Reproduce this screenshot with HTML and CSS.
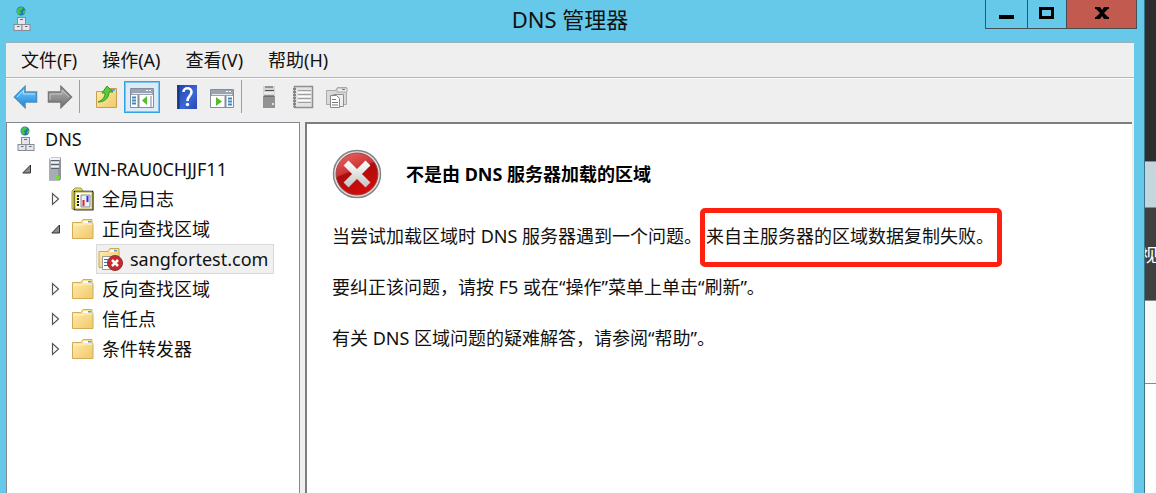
FILE: index.html
```html
<!DOCTYPE html>
<html lang="zh-CN">
<head>
    <meta charset="UTF-8">
    <meta name="viewport" content="width=device-width, initial-scale=1.0">
    <title>DNS 管理器</title>
    <link rel="stylesheet" href="styles.css">
</head>
<body>
    <!-- 公用图标 -->
    <svg class="defs" aria-hidden="true">
        <defs>
            <linearGradient id="gFolder" x1="0" y1="0" x2="1" y2="1">
                <stop offset="0" stop-color="#ffeeb0"/>
                <stop offset="1" stop-color="#f0c868"/>
            </linearGradient>
            <linearGradient id="gBlue" x1="0" y1="0" x2="0" y2="1">
                <stop offset="0" stop-color="#7fd0fb"/>
                <stop offset="1" stop-color="#1585dc"/>
            </linearGradient>
            <linearGradient id="gGray" x1="0" y1="0" x2="0" y2="1">
                <stop offset="0" stop-color="#b5b5b5"/>
                <stop offset="1" stop-color="#707070"/>
            </linearGradient>
            <linearGradient id="gHelp" x1="0" y1="0" x2="1" y2="1">
                <stop offset="0" stop-color="#1f43ac"/>
                <stop offset="0.6" stop-color="#3c67d6"/>
                <stop offset="1" stop-color="#2547b4"/>
            </linearGradient>
            <linearGradient id="gRed" x1="0" y1="0" x2="0.4" y2="1">
                <stop offset="0" stop-color="#ee6a6a"/>
                <stop offset="0.48" stop-color="#cc3434"/>
                <stop offset="0.52" stop-color="#a90d0d"/>
                <stop offset="1" stop-color="#d20a0a"/>
            </linearGradient>
            <linearGradient id="gCross" gradientUnits="userSpaceOnUse" x1="0" y1="12" x2="0" y2="38">
                <stop offset="0" stop-color="#ffffff"/>
                <stop offset="1" stop-color="#c4c4c4"/>
            </linearGradient>
        </defs>
        <symbol id="dns" viewBox="0 0 18 26">
            <circle cx="8" cy="5" r="4.5" fill="#2577b8"/>
            <path d="M4 4Q5 1 9 1L10 3 7 5 8 7 6 9Q3 7 4 4M10 5l2-1v3l-2 1z" fill="#43c34a"/>
            <g fill="#e4e6ec" stroke="#888c94">
                <rect x="4.5" y="11.500" width="8" height="7"/>
                <rect x="1" y="18.500" width="8" height="6"/>
                <rect x="9" y="18.500" width="8" height="6"/>
            </g>
            <path d="M7 13.500h3M4 20.500h2.500M12 20.500h2.500" stroke="#666b74"/>
        </symbol>
        <symbol id="folder" viewBox="0 0 24 24">
            <path d="M1.500 5.500h8.500l2-3h9v4h1v15h-20.500z" fill="url(#gFolder)" stroke="#d3ab57"/>
            <path d="M12 4h8v2h-8z" fill="#fffdf2"/>
            <path d="M17 4h3v1.500h-3z" fill="#4c9fe0"/>
            <path d="M2.500 8h9l2-1h8" fill="none" stroke="#fff5cc"/>
        </symbol>
        <symbol id="server" viewBox="0 0 14 24">
            <path d="M1 2l2-1.500h10V22l-1 1.500H1z" fill="#8d949b"/>
            <path d="M1 2h9v21.500H1z" fill="#a7adb3"/>
            <path d="M2 2h10M3 5.500h8M3 9.500h8" stroke="#eff3f5" stroke-width="2"/>
            <path d="M3 3.500h8M3 7.500h8M3 11.500h8" stroke="#596067"/>
            <circle cx="10" cy="20.500" r="2" fill="#6be51c"/>
        </symbol>
        <symbol id="server-off" viewBox="0 0 14 24">
            <path d="M1 1h12v22H1z" fill="#929292"/>
            <path d="M1 1h12v10H1z" fill="#d4d4d4"/>
            <path d="M3 2h8M3 5.500h9M2 11h10" stroke="#515151"/>
            <path d="M2 8h10" stroke="#fff"/>
            <path d="M10 18h2v2h-2z" fill="#e0e0e0"/>
        </symbol>
        <symbol id="log" viewBox="0 0 24 24">
            <path d="M1 4l3-3h6l2 3v18H1z" fill="#e8e45b" stroke="#9b9a4a"/>
            <path d="M3.500 4.500h18v18h-18z" fill="#fff" stroke="#111" stroke-width="1.500"/>
            <path d="M4 5h17v17H4z" fill="none" stroke="#e8e45b" stroke-width="1"/>
            <path d="M22.500 5v18H5" fill="none" stroke="#777"/>
            <path d="M6 8v12" stroke="#161616" stroke-width="4" stroke-dasharray="2 1"/>
            <path d="M5 8v12" stroke="#f5ee32" stroke-width="2" stroke-dasharray="2 1"/>
            <path d="M10 8h9v12h-9z" fill="#eeeef8" stroke="#888"/>
            <path d="M12.500 13v6" stroke="#e72222" stroke-width="2"/>
            <path d="M16.500 9v6" stroke="#2634d6" stroke-width="2"/>
        </symbol>
        <symbol id="zone-error" viewBox="0 0 26 24">
            <path d="M1 4.500h9l2-3h9v19H1z" fill="url(#gFolder)" stroke="#d0a650"/>
            <path d="M12 3h7v2h-7z" fill="#fffdf2"/>
            <path d="M16 3h3v1.500h-3z" fill="#4c9fe0"/>
            <path d="M4.500 9.500h10v13h-10z" fill="#fff" stroke="#999"/>
            <path d="M6 12.500h4M6 15.500h4M6 18.500h4" stroke="#3b70b8"/>
            <circle cx="17" cy="16" r="7.500" fill="#c4292c" stroke="#8e3436"/>
            <path d="M14 13l6 6M20 13l-6 6" stroke="#fff" stroke-width="2.500"/>
        </symbol>
        <symbol id="closed" viewBox="0 0 10 14">
            <path d="M1.500 1.500v11l6-5.500z" fill="#fff" stroke="#555" stroke-width="1.200"/>
        </symbol>
        <symbol id="open" viewBox="0 0 10 14">
            <path d="M8.500 3v8H.8z" fill="#8a8a8a" stroke="#333"/>
        </symbol>
    </svg>

    <div class="desktop">
        <div class="window">
            <header class="titlebar">
                <svg class="app-icon"><use href="#dns"/></svg>
                <h1>DNS 管理器</h1>
                <div class="controls">
                    <button type="button" class="min" aria-label="最小化"><svg viewBox="0 0 16 14"><path d="M0 9h15v4H0z"/></svg></button>
                    <button type="button" class="max" aria-label="最大化"><svg viewBox="0 0 16 14"><path d="M1.500 2.500h12v9h-12z" fill="none" stroke="#000" stroke-width="3"/></svg></button>
                    <button type="button" class="close" aria-label="关闭"><svg viewBox="0 0 16 14"><path d="M1 1h5l2 3 2-3h5v2h-1l-4 4 4 4h1v2h-5L8 10l-2 3H1v-2h1l4-4-4-4H1z"/></svg></button>
                </div>
            </header>

            <nav class="menubar">
                <button type="button">文件(F)</button>
                <button type="button">操作(A)</button>
                <button type="button">查看(V)</button>
                <button type="button">帮助(H)</button>
            </nav>

            <div class="toolbar">
                <div class="tools nav-tools">
                    <button type="button" aria-label="后退"><svg viewBox="0 0 26 24"><path d="M1.500 12L12 1.500V7h11.500v10H12v5.500z" fill="url(#gBlue)" stroke="#4a90bd" stroke-width="1.500"/><path d="M4 12l6.500-6.500V9H22" fill="none" stroke="#a9e2ff"/></svg></button>
                    <button type="button" aria-label="前进"><svg viewBox="0 0 26 24"><path d="M24.500 12L14 1.500V7H1.500v10H14v5.500z" fill="url(#gGray)" stroke="#777" stroke-width="1.500"/><path d="M3 15V9h12V5l7 7" fill="none" stroke="#c2c2c2"/></svg></button>
                </div>
                <div class="tools view-tools">
                    <button type="button" aria-label="上一级"><svg viewBox="0 0 26 24"><path d="M2.500 6.500h10l2-3h8v19h-20z" fill="url(#gFolder)" stroke="#c6a04e"/><path d="M16 5h5" stroke="#5aa9e5" stroke-width="2"/><path d="M4 17c5-2 7-5 7-9H8l5-7 6 6h-4c0 6-4 10-11 10z" fill="#58cc38" stroke="#389922"/></svg></button>
                    <button type="button" class="active" aria-label="显示/隐藏控制台树"><svg viewBox="0 0 26 24"><path d="M1.500 3.500h23v19h-23z" fill="#fff" stroke="#858d98"/><path d="M2 4h22v6H2z" fill="#9aa4b1"/><path d="M3 8.500h20" stroke="#e3e7ec"/><path d="M17 5.500h2M20 5.500h2" stroke="#fff"/><path d="M9.500 10v12" stroke="#858d98" stroke-width="2"/><path d="M3 12.500h4M3 15.500h4M3 18.500h4" stroke="#3988c8" stroke-width="2"/><path d="M18 11v9l-5-4.500z" fill="#54bd2d"/><path d="M22 11v11" stroke="#bbc2cb" stroke-width="2"/></svg></button>
                </div>
                <div class="tools help-tools">
                    <button type="button" aria-label="帮助"><svg viewBox="0 0 26 24"><path d="M3 0h20v24H3z" fill="url(#gHelp)"/><path d="M4.500 0v24" stroke="#183583" stroke-width="2"/><path d="M9.500 7c0-5 8-5 8 0 0 4-4 4-4 9" fill="none" stroke="#fff" stroke-width="2.600"/><circle cx="13.500" cy="19.500" r="1.700" fill="#fff"/></svg></button>
                    <button type="button" aria-label="显示/隐藏操作窗格"><svg viewBox="0 0 26 24"><path d="M1.500 4.500h23v18h-23z" fill="#fff" stroke="#858d98"/><path d="M2 5h22v6H2z" fill="#9aa4b1"/><path d="M3 9.500h20" stroke="#e3e7ec"/><path d="M17 6.500h2M20 6.500h2" stroke="#fff"/><path d="M16.500 11v11" stroke="#858d98" stroke-width="2"/><path d="M19 13.500h4M19 16.500h4M19 19.500h4" stroke="#3988c8" stroke-width="2"/><path d="M7 12v9l6-4.500z" fill="#54bd2d"/></svg></button>
                </div>
                <div class="tools item-tools">
                    <button type="button" aria-label="新建服务器" disabled><svg><use href="#server-off"/></svg></button>
                    <button type="button" aria-label="新建记录" disabled><svg viewBox="0 0 26 24"><path d="M4.500 1.500h18v21h-18z" fill="#e4e4e4" stroke="#8f8f8f" stroke-width="1.500"/><path d="M8 5.500h13M8 9.500h13M8 13.500h13M8 17.500h13" stroke="#a0a0a0"/><path d="M8 7.500h13M8 11.500h13M8 15.500h13" stroke="#fff"/><path d="M4.500 3v19" stroke="#858585" stroke-width="3" stroke-dasharray="2 1"/></svg></button>
                    <button type="button" aria-label="新建区域" disabled><svg viewBox="0 0 26 24"><path d="M2.500 5.500h9l2-3h9v17h-20z" fill="#d9d9d9" stroke="#aaa"/><path d="M13 3h10v4H13z" fill="#eee" stroke="#aaa"/><path d="M18 4.500h3" stroke="#777"/><path d="M9.500 9.500h10v12h-10z" fill="#eee" stroke="#909090"/><path d="M6.500 10.500h6l3 3v9h-9z" fill="#fff" stroke="#888"/><path d="M8 14.500h4M8 17.500h6M8 20h6" stroke="#777"/></svg></button>
                </div>
            </div>

            <div class="panes">
                <aside class="tree">
                    <div class="node root"><svg class="icon-dns"><use href="#dns"/></svg><span>DNS</span></div>
                    <div class="node host"><svg class="arrow"><use href="#open"/></svg><svg class="icon-server"><use href="#server"/></svg><span>WIN-RAU0CHJJF11</span></div>
                    <div class="node child"><svg class="arrow"><use href="#closed"/></svg><svg class="icon"><use href="#log"/></svg><span>全局日志</span></div>
                    <div class="node child"><svg class="arrow"><use href="#open"/></svg><svg class="icon"><use href="#folder"/></svg><span>正向查找区域</span></div>
                    <div class="node zone"><div class="selected"><svg class="icon"><use href="#zone-error"/></svg><span>sangfortest.com</span></div></div>
                    <div class="node child"><svg class="arrow"><use href="#closed"/></svg><svg class="icon"><use href="#folder"/></svg><span>反向查找区域</span></div>
                    <div class="node child"><svg class="arrow"><use href="#closed"/></svg><svg class="icon"><use href="#folder"/></svg><span>信任点</span></div>
                    <div class="node child"><svg class="arrow"><use href="#closed"/></svg><svg class="icon"><use href="#folder"/></svg><span>条件转发器</span></div>
                </aside>

                <main class="content">
                    <div class="heading">
                        <svg class="error-icon" viewBox="0 0 50 50">
                            <circle cx="25" cy="25" r="23.500" fill="#e4e4e4" stroke="#858585" stroke-width="1.500"/>
                            <circle cx="25" cy="25" r="21" fill="url(#gRed)" stroke="#a04545"/>
                            <path d="M16.500 16.500l17 17M33.500 16.500l-17 17" stroke="url(#gCross)" stroke-width="7" stroke-linecap="square"/>
                        </svg>
                        <h2>不是由 DNS 服务器加载的区域</h2>
                    </div>
                    <p>当尝试加载区域时 DNS 服务器遇到一个问题。<span class="highlight">来自主服务器的区域数据复制失败。</span></p>
                    <p>要纠正该问题，请按 F5 或在“操作”菜单上单击“刷新”。</p>
                    <p>有关 DNS 区域问题的疑难解答，请参阅“帮助”。</p>
                </main>
            </div>
        </div>

        <!-- 窗口后面露出的部分 -->
        <div class="behind">
            <div class="strip dark"></div>
            <div class="strip pale"></div>
            <div class="strip label">视</div>
            <div class="strip light"></div>
        </div>
    </div>
</body>
</html>
```

FILE: styles.css
```css
* {
    box-sizing: border-box;
}
body {
    margin: 0;
    font-family: "Noto Sans", "Noto Sans CJK SC", sans-serif;
    font-size: 18px;
    line-height: 30px;
    color: #111;
    background: #fff;
}
button {
    padding: 0;
    border: none;
    background: none;
    font: inherit;
    color: inherit;
}
svg {
    display: block;
    flex: none;
}
.defs {
    position: absolute;
    width: 0;
    height: 0;
}
.desktop {
    display: flex;
    height: 100vh;
    overflow: hidden;
}

/* 窗口 */
.window {
    flex: 1;
    min-width: 0;
    display: flex;
    flex-direction: column;
    padding: 0 10px 0 6px;
    background: #66c9e9;
    border-right: 1px solid #38748a;
}
.titlebar {
    display: grid;
    grid-template-columns: 1fr auto 1fr;
    align-items: start;
    height: 42px;
}
.app-icon {
    width: 18px;
    height: 26px;
    margin: 6px 0 0 7px;
}
h1 {
    margin: 4px 0 0;
    font-size: 22px;
    font-weight: 400;
    line-height: 30px;
}
.controls {
    display: flex;
    justify-self: end;
    margin-right: -3px;
    border: 1px solid #454f55;
    border-top: none;
}
.controls button {
    display: flex;
    justify-content: center;
    width: 42px;
    height: 28px;
    padding-top: 6px;
    border-right: 1px solid #454f55;
}
.controls .max {
    width: 39px;
}
.controls .close {
    width: 69px;
    border-right: none;
    background: #c35a50;
}
.controls svg {
    width: 16px;
    height: 14px;
}

/* 菜单和工具栏 */
.menubar {
    display: flex;
    gap: 25px;
    height: 36px;
    padding: 1px 15px;
    background: #efefef;
    border-top: 1px solid #9ab0b8;
    border-bottom: 1px solid #b4b7bb;
}
.toolbar {
    display: flex;
    height: 44px;
    padding-top: 1px;
    background: #efefef;
    border-top: 1px solid #fafafa;
}
.tools {
    display: flex;
    height: 33px;
    align-items: center;
}
.tools svg {
    height: 24px;
    width: 26px;
}
.nav-tools {
    gap: 8px;
    padding: 0 6px 0 7px;
    border-right: 1px solid #a0a0a0;
}
.view-tools {
    gap: 4px;
    padding-left: 14px;
}
.view-tools .active {
    padding: 3px 4px;
    border: 1px solid #35a3e0;
    outline: 1px solid #7cc4ed;
    outline-offset: -2px;
    background: #dcebfa;
}
.help-tools {
    gap: 9px;
    padding: 0 6px 0 14px;
    border-right: 1px solid #a0a0a0;
}
.item-tools {
    gap: 8px;
    padding-left: 20px;
}
.item-tools button:first-child svg {
    width: 14px;
    margin-right: 6px;
}

/* 左侧树 */
.panes {
    flex: 1;
    display: flex;
    gap: 5px;
    min-height: 0;
    padding-right: 2px;
    background: #efefef;
}
.tree {
    flex: none;
    width: 294px;
    padding-top: 1px;
    background: #fff;
    border: 1px solid #828790;
    border-width: 1px 1px 0;
}
.node {
    display: flex;
    align-items: center;
    height: 30px;
}
.root {
    gap: 10px;
    padding-left: 10px;
}
.host {
    padding-left: 15px;
}
.child {
    padding-left: 44px;
}
.zone {
    padding-left: 89px;
}
.arrow {
    width: 10px;
    height: 14px;
}
.icon {
    width: 24px;
    height: 24px;
    margin: 0 7px 0 10px;
}
.icon-dns {
    width: 18px;
    height: 26px;
}
.icon-server {
    width: 14px;
    height: 24px;
    margin: 0 12px 0 16px;
}
.selected {
    display: flex;
    align-items: center;
    height: 30px;
    padding-right: 5px;
    background: #f0f0f0;
    border: 1px solid #d9d9d9;
}
.selected .icon {
    width: 26px;
    margin: 0 6px 0 1px;
}

/* 右侧内容 */
.content {
    flex: 1;
    min-width: 0;
    padding: 25px 24px 0 25px;
    background: #fff;
    border: 2px solid #7d7d7d;
    border-width: 2px 0 0 2px;
}
.heading {
    display: flex;
    align-items: center;
    gap: 24px;
    margin-bottom: 22px;
}
.error-icon {
    width: 50px;
    height: 50px;
}
h2 {
    margin: 0;
    font-size: 18px;
    line-height: 30px;
    color: #000;
}
.content p {
    margin: 0 0 21px;
}
.highlight {
    position: relative;
    margin-left: 4px;
}
.highlight::after {
    content: "";
    position: absolute;
    inset: -16px -8px -19px -6px;
    border: 5px solid #ff2010;
    border-radius: 5px;
}

/* 后面的窗口 */
.behind {
    width: 11px;
    overflow: hidden;
}
.strip {
    border-bottom: 1px solid #8a8a8a;
}
.dark {
    height: 162px;
    background: #2d2d2d;
}
.pale {
    height: 46px;
    background: #c4d6dd;
}
.label {
    height: 93px;
    padding-top: 32px;
    background: #404040;
    color: #fff;
    text-indent: -5px;
}
.light {
    height: 83px;
    background: #f8f8f8;
}
```
